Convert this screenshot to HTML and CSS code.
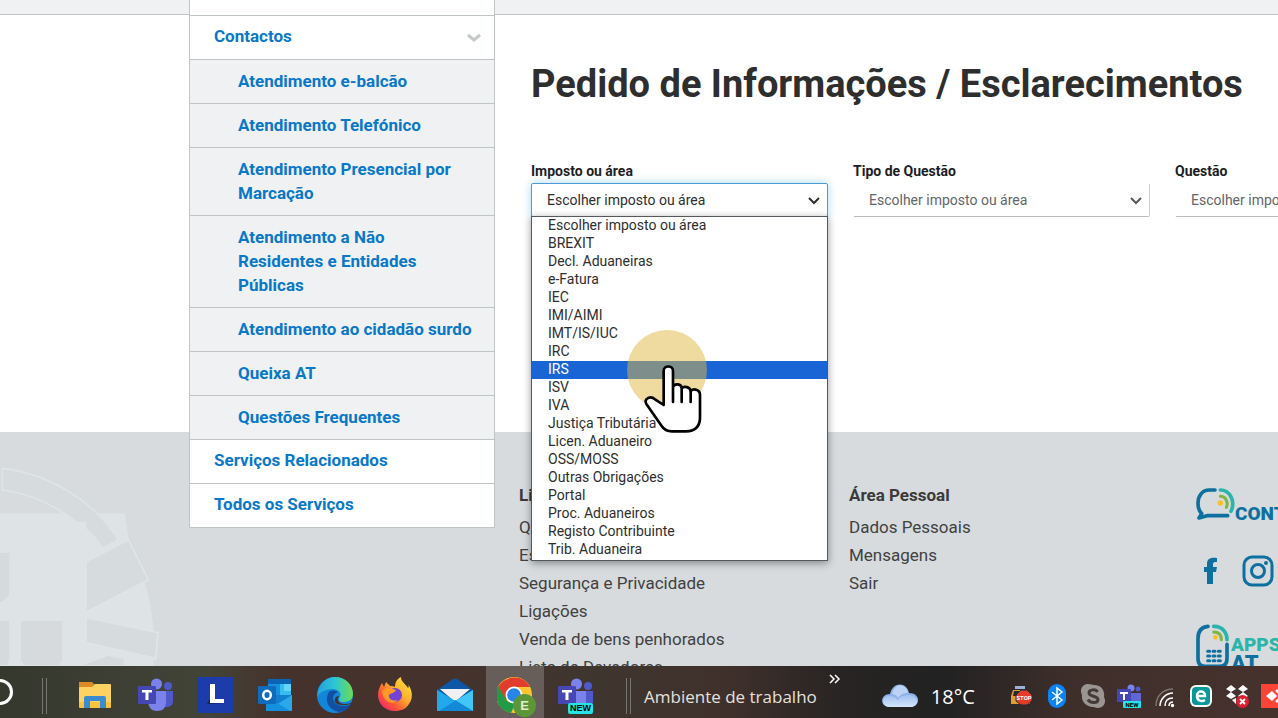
FILE: index.html
```html
<!DOCTYPE html>
<html lang="pt">
<head>
    <meta charset="UTF-8">
    <meta name="viewport" content="width=device-width, initial-scale=1.0">
    <title>Pedido de Informações / Esclarecimentos</title>
    <link rel="stylesheet" href="styles.css">
</head>
<body>
    <div class="page">
        <div class="strip"></div>
        <div class="content">
            <nav class="sidebar">
                <div class="sidebar-top"></div>
                <a href="#">Contactos
                    <svg class="sidebar-arrow" viewBox="0 0 14 10"><path d="M1 2l6 5 6-5" fill="none" stroke="#c6cbca" stroke-width="3"/></svg>
                </a>
                <a href="#" class="sub">Atendimento e-balcão</a>
                <a href="#" class="sub">Atendimento Telefónico</a>
                <a href="#" class="sub">Atendimento Presencial por Marcação</a>
                <a href="#" class="sub">Atendimento a Não Residentes e Entidades Públicas</a>
                <a href="#" class="sub">Atendimento ao cidadão surdo</a>
                <a href="#" class="sub">Queixa AT</a>
                <a href="#" class="sub">Questões Frequentes</a>
                <a href="#">Serviços Relacionados</a>
                <a href="#">Todos os Serviços</a>
            </nav>
            <main>
                <h1>Pedido de Informações / Esclarecimentos</h1>
                <form class="fields">
                    <div class="field">
                        <label for="imposto">Imposto ou área</label>
                        <div class="picker open">
                            <select id="imposto"><option>Escolher imposto ou área</option></select>
                            <svg class="chevron" viewBox="0 0 14 10"><path d="M2 2l5 5 5-5"/></svg>
                            <ul class="options" role="listbox" aria-label="Imposto ou área">
                                <li role="option">Escolher imposto ou área</li>
                                <li role="option">BREXIT</li>
                                <li role="option">Decl. Aduaneiras</li>
                                <li role="option">e-Fatura</li>
                                <li role="option">IEC</li>
                                <li role="option">IMI/AIMI</li>
                                <li role="option">IMT/IS/IUC</li>
                                <li role="option">IRC</li>
                                <li role="option" class="active" aria-selected="true">IRS</li>
                                <li role="option">ISV</li>
                                <li role="option">IVA</li>
                                <li role="option">Justiça Tributária</li>
                                <li role="option">Licen. Aduaneiro</li>
                                <li role="option">OSS/MOSS</li>
                                <li role="option">Outras Obrigações</li>
                                <li role="option">Portal</li>
                                <li role="option">Proc. Aduaneiros</li>
                                <li role="option">Registo Contribuinte</li>
                                <li role="option">Trib. Aduaneira</li>
                            </ul>
                        </div>
                    </div>
                    <div class="field">
                        <label for="tipo">Tipo de Questão</label>
                        <div class="picker">
                            <select id="tipo"><option>Escolher imposto ou área</option></select>
                            <svg class="chevron" viewBox="0 0 14 10"><path d="M2 2l5 5 5-5"/></svg>
                        </div>
                    </div>
                    <div class="field">
                        <label for="questao">Questão</label>
                        <div class="picker">
                            <select id="questao"><option>Escolher imposto ou área</option></select>
                            <svg class="chevron" viewBox="0 0 14 10"><path d="M2 2l5 5 5-5"/></svg>
                        </div>
                    </div>
                </form>
            </main>
        </div>

        <footer>
            <svg class="emblem" viewBox="0 6 600 702">
                <path fill="#dee3e5" d="M0 250H375L385 325 448 450 435 458Q455 530 462 605L477 607 470 689 460 691V708H0z"/>
                <g fill="#d6dbde" stroke="#dfe4e5" stroke-width="5">
                    <path d="M7 115C150 132 285 215 355 330L308 355Q280 312 256 296V278H230C165 225 90 190 7 180z"/>
                    <path d="M258 395L385 330 445 450 258 546z"/>
                    <path d="M258 563L474 608 467 685 258 638z"/>
                </g>
                <g fill="#d6dadc">
                    <path d="M0 368H28V490Q22 508 0 517z"/>
                    <path d="M0 573H28V690L20 705H0z"/>
                    <path d="M63 573H187V690L177 705H73L63 690z"/>
                    <path d="M250 705L325 678 370 688V705z"/>
                </g>
            </svg>
            <div class="footer-col">
                <h2>Links Úteis</h2>
                <a href="#">Quem Somos</a>
                <a href="#">Estatuto</a>
                <a href="#">Segurança e Privacidade</a>
                <a href="#">Ligações</a>
                <a href="#">Venda de bens penhorados</a>
                <a href="#">Lista de Devedores</a>
            </div>
            <div class="footer-col">
                <h2>Área Pessoal</h2>
                <a href="#">Dados Pessoais</a>
                <a href="#">Mensagens</a>
                <a href="#">Sair</a>
            </div>
            <div class="brands">
                <a href="#" class="brand">
                    <svg width="40" height="36" viewBox="0 0 120 108" fill="none" stroke-linecap="round">
                        <path d="M60 12H43C22 12 9 29 9 52 9 66 13 76 20 83L12 96 36 89H98" stroke="#0d709f" stroke-width="11" stroke-linejoin="round"/>
                        <path d="M76 12C105 12 122 46 108 76" stroke="#2bb5aa" stroke-width="11"/>
                        <path d="M76 31C93 31 101 50 94 64" stroke="#7db742" stroke-width="9"/>
                        <circle cx="76" cy="51" r="8" fill="#fbbf24"/>
                    </svg>
                    <span class="brand-contact">CONT</span>
                </a>
                <div class="social">
                    <a href="#" aria-label="Facebook">
                        <svg width="14" height="28" viewBox="0 0 14 28"><path fill="#0d709f" d="M3 27V15H0V10H3V7C3 2 6 0 13 1V5C10 5 9 5 9 8V10H13L12 15H9V27z"/></svg>
                    </a>
                    <a href="#" aria-label="Instagram">
                        <svg width="32" height="32" viewBox="0 0 32 32" fill="none" stroke="#0d709f" stroke-width="3"><rect x="2" y="2" width="28" height="28" rx="8"/><circle cx="16" cy="16" r="6.5"/><circle cx="24" cy="8" r="1" stroke-width="2"/></svg>
                    </a>
                </div>
                <a href="#" class="brand">
                    <svg width="36" height="46" viewBox="0 0 108 138" fill="none" stroke-linecap="round">
                        <path d="M39 10C18 12 9 24 9 46V106Q9 130 29 130H75Q96 130 96 106V64" stroke="#0d709f" stroke-width="11"/>
                        <path d="M56 10C82 9 96 29 96 50" stroke="#2bb5aa" stroke-width="11"/>
                        <path d="M56 27C72 27 79 37 79 50" stroke="#7db742" stroke-width="9"/>
                        <circle cx="61" cy="43" r="7" fill="#fbbf24"/>
                        <path d="M38 85H44M54 85H60M70 85H76M38 99H44M54 99H60M70 99H76M38 113H44M54 113H60M70 113H76" stroke="#0d709f" stroke-width="9"/>
                    </svg>
                    <span class="brand-apps">APPS<b>AT</b></span>
                </a>
            </div>
        </footer>
    </div>

    <div class="taskbar">
        <svg class="cortana" width="14" height="30" viewBox="0 0 14 30"><circle cx="0" cy="15" r="11.5" fill="none" stroke="#fff" stroke-width="3"/></svg>
        <i class="divider"></i>
        <div class="apps">
            <button aria-label="Explorador">
                <svg viewBox="0 0 36 36"><path fill="#dc8b20" d="M2 5h13l3 3v5H2z"/><path fill="#fdd263" d="M2 11q0-1 1-1h12l3-3h15q1 0 1 1v22H2z"/><path fill="#fbc33c" d="M2 25h32v5q0 1-1 1H3q-1 0-1-1z"/><path fill="#3b8bd0" d="M7 31V21q0-2 2-2h18q2 0 2 2v10h-6v-7H13v7z"/></svg>
            </button>
            <button aria-label="Teams">
                <svg viewBox="0 0 36 36"><circle cx="19.500" cy="7" r="5.500" fill="#7b83eb"/><circle cx="31" cy="9" r="4" fill="#5059c9"/><path fill="#5059c9" d="M28 14h8v10q0 6-7 6h-4z"/><path fill="#7b83eb" d="M12 14h17v11q0 9-9 9-8 0-9-9z"/><rect y="9" x="1" width="18" height="18" rx="1" fill="#4548b4"/><path fill="#fff" d="M5 13h10v2.500h-3.500V23h-3v-7.500H5z"/></svg>
            </button>
            <button aria-label="L">
                <svg viewBox="0 0 36 36"><path fill="#1d3cac" d="M0 0h36v36H0z"/><path fill="#102457" d="M10 27l3-5v4h14z"/><path fill="#fff" d="M13 7h5v15h9v4H13z"/></svg>
            </button>
            <button aria-label="Outlook">
                <svg viewBox="0 0 36 36"><path fill="#0a63b4" d="M11 2h23v8H11z"/><path fill="#1690df" d="M11 7h12v13H11z"/><path fill="#35bdf2" d="M23 7h11v13H23z"/><path fill="#63d7fa" d="M27 7h7v7h-7z"/><path fill="#127fce" d="M9 18l26 0v16H9z"/><path fill="#29a9e9" d="M35 18v15q0 1-1 1H9z"/><path fill="#1490df" d="M9 20l25 14H10q-1 0-1-1z"/><rect x="1" y="9" width="18" height="18" rx="1" fill="#0f6cbd"/><ellipse cx="10" cy="18" rx="3.800" ry="4.200" fill="none" stroke="#fff" stroke-width="2.500"/></svg>
            </button>
            <button aria-label="Edge">
                <svg viewBox="0 0 36 36"><defs><linearGradient id="edgeTop"><stop offset="0" stop-color="#249fe3"/><stop offset=".5" stop-color="#2cc6d4"/><stop offset="1" stop-color="#6edb50"/></linearGradient></defs><circle cx="18" cy="18" r="18" fill="#1286d9"/><path fill="url(#edgeTop)" d="M1 14C4 5 10 0 18 0c11 0 18 8 18 17 0 6-5 8-9 8-5 0-6-2-4-5 2-4-2-8-7-8C9 12 3 15 0 20z"/><path fill="#1150a0" d="M12 15c-4 6-3 17 10 20 5 0 10-4 12-8-7 4-18 2-18-6 0-3 2-5 5-6-3-2-7-2-9 0z"/><path fill="#46322d" d="M22 19c-4 6 3 10 12 7l3-3v5l-4-1c-9 3-17 0-15-5 0-2 2-3 4-3z"/></svg>
            </button>
            <button aria-label="Firefox">
                <svg viewBox="0 0 36 36"><defs><linearGradient id="fox" x1="1" y1="0" x2="0" y2="1"><stop offset="0" stop-color="#fff23f"/><stop offset=".4" stop-color="#ffb02c"/><stop offset=".7" stop-color="#ff5038"/><stop offset="1" stop-color="#e3188b"/></linearGradient></defs><path fill="url(#fox)" d="M18 34C8 34 1 27 1 18c0-5 2-9 4-12l2 4 2-5 4 4c2 0 4 0 5 1 0-5 2-8 6-10 0 5 4 6 7 11 1-1 1-2 0-4 5 7 5 15 1 20-3 5-8 7-14 7z"/><circle cx="18" cy="18" r="7" fill="#7343d4"/><path fill="#ff9a28" d="M5 14c6-5 10-2 14-1-1 3-5 3-7 5-1 3 3 7 9 5-6 6-15 2-16-9z"/></svg>
            </button>
            <button aria-label="Correio">
                <svg viewBox="0 0 36 36"><path fill="#0c57a6" d="M0 13L16 2q2-1 4 0l16 11v10H0z"/><path fill="#f1f1f4" d="M3 12h30L18 25z"/><path fill="#1ba0e8" d="M0 13l18 11 18-11v21H0z"/><path fill="#42c5f7" d="M36 13L18 24l18 10z"/><path fill="#1389d7" d="M0 34l18-11 18 11z"/><path fill="#22a8ec" d="M0 13l18 11L2 34H0z"/></svg>
            </button>
            <button class="current" aria-label="Chrome">
                <svg viewBox="0 0 36 36"><circle cx="17" cy="18" r="18" fill="#fbc52d"/><path fill="#e33b2e" d="M1 10C8-2 26-3 33 10H17l-8 13z"/><path fill="#239a46" d="M1 9l9 15 8 3-4 9C1 34-4 20 1 9z"/><circle cx="17" cy="18" r="8.500" fill="#fff"/><circle cx="17" cy="18" r="6.800" fill="#2784e8"/></svg>
                <span class="profile">E</span>
            </button>
            <button aria-label="Teams novo">
                <svg viewBox="0 0 36 36"><circle cx="19.500" cy="7" r="5.500" fill="#7b83eb"/><circle cx="31" cy="9" r="4" fill="#5059c9"/><path fill="#5059c9" d="M28 14h8v12H25z"/><path fill="#7b83eb" d="M12 14h17v13H12z"/><rect y="9" x="1" width="18" height="18" rx="1" fill="#4548b4"/><path fill="#fff" d="M5 13h10v2.500h-3.500V23h-3v-7.500H5z"/></svg>
                <span class="new">NEW</span>
            </button>
        </div>
        <i class="divider"></i>
        <span class="desktop">Ambiente de trabalho</span>
        <svg class="more" width="12" height="10" viewBox="0 0 12 10" fill="none" stroke="#fff" stroke-width="1.500"><path d="M1 1l4 4-4 4M6 1l4 4-4 4"/></svg>
        <div class="weather">
            <svg width="36" height="24" viewBox="0 0 36 24"><defs><linearGradient id="cloud" x1="0" y1="0" x2="0" y2="1"><stop offset="0" stop-color="#9fc0f0"/><stop offset="1" stop-color="#d6e5fb"/></linearGradient></defs><path fill="#8db2e8" d="M8 23c-11 0-10-13 0-13C11-3 25-2 27 9c12 0 12 14 1 14z"/><path fill="url(#cloud)" d="M8 23c-9 0-9-11-1-11 5 0 7 2 9 4 3-5 8-5 11-5 11 1 10 12 1 12z"/><path fill="#bcd3f5" d="M10 10C13-2 24-1 26 9c-5 0-8 2-10 5-1-2-3-4-6-4z"/></svg>
            <span>18°C</span>
        </div>
        <div class="tray">
            <svg viewBox="0 0 24 24"><path fill="#9cb1d8" d="M6 2h10v3H6z"/><path fill="#df9f31" d="M4 6h14l3 6v8H2v-8z"/><path fill="#262a32" d="M5 7h12l2 5H4zM2 20h5v2H2zM16 20h5v2h-5z"/><path fill="#e43b2b" stroke="#262a32" d="M12 6h6l5 5v6l-5 4h-6l-5-4v-6z"/><text x="15" y="16" text-anchor="middle" class="tiny">STOP</text></svg>
            <svg viewBox="0 0 24 24"><rect x="3" width="18" height="24" rx="9" fill="#0a84f5"/><path fill="none" stroke="#fff" stroke-width="1.500" d="M7 8l10 8-5 4V4l5 4-10 8"/></svg>
            <svg viewBox="0 0 24 24"><path fill="#9b9592" d="M7 0c3 0 4 1 6 1 7 0 11 5 10 12 3 6-1 11-6 11-3 0-3-1-5-1C5 23 0 17 1 11-2 5 2 0 7 0z"/><path fill="none" stroke="#433b38" stroke-width="3" d="M16.500 8C15 5 8 5 8 9s9 2.500 9 6.500-8 4-10 0"/></svg>
            <svg viewBox="0 0 24 24"><circle cx="14" cy="4" r="3.500" fill="#7b83eb"/><circle cx="21" cy="5" r="2.500" fill="#5059c9"/><path fill="#6067d5" d="M9 9h15v9H9z"/><path fill="#4548b4" d="M0 5h14v13H0z"/><path fill="#fff" d="M3 8h8v2H8v6H6v-6H3z"/><rect x="6" y="17" width="18" height="7" rx="1" fill="#25e4e4"/><text x="15" y="23" text-anchor="middle" class="tiny dark">NEW</text></svg>
            <svg viewBox="0 0 24 24" fill="none" stroke="#fff" stroke-width="1.500"><path stroke="#82736e" d="M3 22C3 12 10 5 20 5"/><path d="M7 22C7 15 13 9 20 9M12 22q0-8 8-8M16 22q0-4 4-4"/><circle cx="19.500" cy="21.500" r="1" fill="#fff"/></svg>
            <svg viewBox="0 0 24 24"><rect x="1" y="1" width="22" height="22" rx="6" fill="#fff"/><rect x="3" y="3" width="18" height="18" rx="4" fill="#08979a"/><path fill="none" stroke="#fff" stroke-width="2.500" d="M8 12h8c0-6-8-6-8 0 0 5 5 6 8 4"/></svg>
            <svg viewBox="0 0 24 24"><path fill="#fff" d="M6 1l5 4-5 3-5-3zM18 1l5 4-5 3-5-3zM6 8l5 4-5 3-5-3zM18 8l5 4-5 3-5-3zM7 16l4-2v6z"/><circle cx="17.500" cy="17.500" r="6.500" fill="#dc2032"/><path stroke="#fff" stroke-width="1.800" d="M15 15l5 5M20 15l-5 5"/></svg>
            <svg viewBox="0 0 24 24"><path fill="#fb4438" d="M0 0h24v24H0z"/><path fill="#fff" d="M5 12l6-5 5 5-5 5z"/><path fill="none" stroke="#fff" stroke-width="2.500" d="M15 6l6 6-6 6"/></svg>
        </div>
    </div>

    <svg class="pointer" viewBox="80 30 240 309">
        <circle cx="200" cy="150" r="120" fill="#dfb840" fill-opacity=".5"/>
        <path fill="#fff" stroke="#000" stroke-width="8" stroke-linejoin="round" stroke-linecap="round" d="M190 255V153C190 135 218 135 218 153V200C223 190 243 190 244 205 250 197 270 200 271 214 278 203 299 209 299 224V295Q297 333 257 334H215Q194 334 184 318L138 252C130 236 150 226 164 238L190 255M218 200V246M244 205V246M271 214V246"/>
    </svg>
</body>
</html>
```

FILE: styles.css
```css
* {
    box-sizing: border-box;
}
body {
    font-family: Roboto, "Liberation Sans", sans-serif;
    background-color: #fff;
    color: #2e2e2e;
    margin: 0;
    height: 100vh;
    display: flex;
    flex-direction: column;
    overflow: hidden;
}
a {
    text-decoration: none;
    color: inherit;
}
.page {
    flex: 1;
    min-height: 0;
    overflow: hidden;
    display: flex;
    flex-direction: column;
}
.strip {
    flex: none;
    height: 15px;
    background-color: #f0f1f3;
    border-bottom: 1px solid #bfc4c7;
}
.content {
    display: flex;
    align-items: flex-start;
    flex: none;
    padding-left: 189px;
}

/* menu lateral */
.sidebar {
    position: relative;
    z-index: 1;
    flex: none;
    width: 306px;
    margin-top: -15px;
    background-color: #fff;
    border: 1px solid #bfc4c7;
    border-top: 0;
}
.sidebar-top {
    height: 15px;
}
.sidebar a {
    display: flex;
    justify-content: space-between;
    border-top: 1px solid #bfc4c7;
    padding: 8px 13px 11px 24px;
    font-size: 17px;
    line-height: 24px;
    font-weight: 700;
    color: #0878c8;
}
.sidebar .sub {
    background-color: #f0f1f3;
    padding: 9px 22px 10px 48px;
}
.sidebar-arrow {
    width: 14px;
    height: 10px;
    margin-top: 9px;
}

/* formulario */
main {
    padding: 45px 36px 0;
}
h1 {
    margin: 0 0 53px;
    font-size: 38px;
    line-height: 48px;
    font-weight: 700;
    white-space: nowrap;
}
.fields {
    display: grid;
    grid-template-columns: repeat(3, 297px);
    gap: 25px;
}
.field label {
    display: block;
    margin-bottom: 2px;
    font-size: 14px;
    line-height: 20px;
    font-weight: 700;
    color: #1c1d1f;
}
.picker {
    position: relative;
}
.picker select {
    display: block;
    width: 100%;
    height: 34px;
    padding: 0 15px;
    appearance: none;
    background-color: #fff;
    border: 1px solid transparent;
    border-right-color: #c8cccf;
    border-bottom-color: #b8bdc0;
    border-radius: 2px;
    font-family: inherit;
    font-size: 14px;
    color: #62666a;
}
.picker.open select {
    border-color: #4a9bdc;
    box-shadow: 0 0 10px #a9d9f5;
    color: #2e2e2e;
}
.chevron {
    position: absolute;
    top: 13px;
    right: 7px;
    width: 14px;
    height: 10px;
    fill: none;
    stroke: #55585c;
    stroke-width: 2;
}
.open .chevron {
    stroke: #2e2e2e;
}
.options {
    position: absolute;
    z-index: 2;
    top: 33px;
    left: 0;
    right: 0;
    margin: 0;
    padding: 0 0 1px;
    list-style: none;
    background-color: #fff;
    border: 1px solid #55585c;
    box-shadow: 0 2px 8px rgba(0, 0, 0, 0.4);
    font-size: 14px;
    line-height: 16px;
}
.options li {
    padding: 0 0 2px 16px;
}
.options .active {
    background-color: #1a65d6;
    color: #fff;
}

/* rodape */
footer {
    flex: 1 0 auto;
    display: flex;
    align-items: flex-start;
    margin-top: -96px;
    background-color: #d7dbde;
}
.emblem {
    flex: none;
    width: 200px;
    height: 234px;
    margin-right: 319px;
}
.footer-col {
    flex: none;
    width: 330px;
    padding-top: 49px;
    font-size: 17px;
    line-height: 28px;
    color: #414141;
}
.footer-col h2 {
    margin: 0 0 4px;
    font-size: 17px;
    line-height: 28px;
    font-weight: 700;
    color: #3a3a3a;
}
.footer-col a {
    display: block;
}
.brands {
    flex: none;
    padding: 54px 0 0 16px;
    font-weight: 900;
    font-size: 19px;
    line-height: 19px;
    color: #0d709f;
}
.brand {
    display: flex;
}
.brand-contact {
    padding-top: 18px;
}
.brand-apps {
    padding-top: 12px;
    color: #2bb5aa;
}
.brand-apps b {
    display: block;
    color: #0d709f;
    font-size: 22px;
}
.social {
    display: flex;
    align-items: center;
    gap: 24px;
    padding: 32px 0 36px 9px;
}
.social svg {
    display: block;
}

/* barra de tarefas */
.taskbar {
    flex: none;
    height: 52px;
    display: flex;
    align-items: center;
    overflow: hidden;
    font-family: "Open Sans", "Noto Sans", sans-serif;
    color: #fff;
    background: linear-gradient(90deg, #35382d 0%, #434438 16%, #46322d 22%, #46322d 35%, #3f362f 46%, #40302b 57%, #272423 66%, #222 74%, #3f2f2b 84%, #46322d 100%);
}
.divider {
    flex: none;
    width: 5px;
    height: 36px;
    margin-left: 28px;
    margin-top: 8px;
    border: 1px solid #77776f;
    border-width: 0 1px;
}
.apps {
    flex: none;
    display: flex;
    gap: 2px;
    height: 100%;
    margin-left: 19px;
    margin-right: -6px;
}
.apps button {
    position: relative;
    width: 58px;
    padding: 8px 0 0;
    border: 0;
    background: none;
}
.apps svg {
    width: 36px;
    height: 36px;
}
.apps .current {
    background-color: #685e59;
}
.profile {
    position: absolute;
    left: 27px;
    top: 28px;
    width: 23px;
    height: 23px;
    border-radius: 50%;
    background-color: #5d9638;
    color: #dff0cd;
    font-size: 13px;
    line-height: 23px;
    font-weight: 700;
}
.new {
    position: absolute;
    left: 22px;
    top: 37px;
    padding: 0 2px;
    border-radius: 2px;
    background-color: #25e4e4;
    color: #000;
    font-size: 9px;
    line-height: 11px;
    font-weight: 800;
}
.desktop {
    margin-left: 13px;
    padding-top: 8px;
    font-size: 17px;
    white-space: nowrap;
    color: #e4e1df;
}
.more {
    flex: none;
    align-self: flex-start;
    margin: 8px 0 0 12px;
}
.weather {
    display: flex;
    align-items: center;
    gap: 13px;
    margin: 8px 0 0 41px;
    font-size: 20px;
}
.tray {
    flex: none;
    display: flex;
    gap: 12px;
    margin: 8px -7px 0 auto;
}
.tray svg {
    width: 24px;
    height: 24px;
}
.tiny {
    font: 700 6px Roboto, sans-serif;
    fill: #fff;
}
.tiny.dark {
    fill: #000;
}
.pointer {
    position: absolute;
    z-index: 3;
    left: 627px;
    top: 330px;
    width: 80px;
    height: 103px;
    pointer-events: none;
}
```
